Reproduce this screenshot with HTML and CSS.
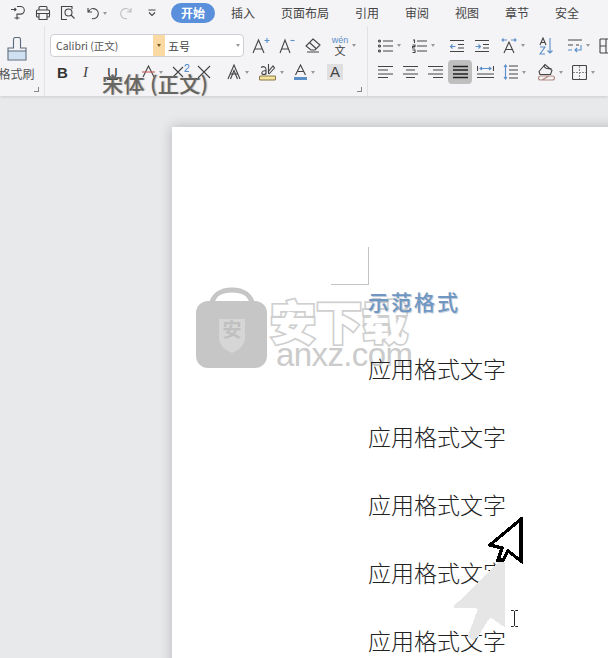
FILE: index.html
```html
<!DOCTYPE html>
<html lang="zh">
<head>
<meta charset="utf-8">
<title>文字</title>
<link rel="stylesheet" href="styles.css">
</head>
<body>
<div class="app">
  <header class="ribbon">
    <div class="tabs">
      <div class="quick">
        <span class="q w25"><svg width="16" height="16" viewBox="0 0 16 16" class="ic"><path d="M7 1.500h3.500a3.800 3.800 0 0 1 0 7.600H7V14.500M1 4.500h5M4.500 3L6 4.500 4.500 6M4.500 13h5"/></svg></span>
        <span class="q w25"><svg width="16" height="16" viewBox="0 0 16 16" class="ic"><path d="M4 5V2.500a1 1 0 0 1 1-1h6a1 1 0 0 1 1 1V5M4 12H2.500a1 1 0 0 1-1-1V6a1 1 0 0 1 1-1h11a1 1 0 0 1 1 1v5a1 1 0 0 1-1 1H12M1.500 8.500h13M4 8.500v6h8v-6"/></svg></span>
        <span class="q w27"><svg width="16" height="16" viewBox="0 0 16 16" class="ic"><path d="M12 4V1.500H1.500v13H7"/><circle cx="8.500" cy="7.500" r="3.500"/><path d="M11 10l3.500 3.500"/></svg></span>
        <span class="q w33"><svg width="12" height="14" viewBox="0 0 12 14" class="ic"><path d="M1 2v4h4M1.500 6A5 5 0 1 1 5 12.500"/></svg><i class="caret"></i></span>
        <span class="q w28"><svg width="12" height="14" viewBox="0 0 12 14" class="ic faint"><path d="M11 2v4H7M10.500 6A5 5 0 1 0 7 12.500"/></svg></span>
        <span class="q w20"><svg width="8" height="9" viewBox="0 0 8 9" class="ic"><path d="M.500 1h7M1 3.500l3 3 3-3"/></svg></span>
      </div>
      <nav class="tablist">
        <span class="tab active">开始</span>
        <span class="tab">插入</span>
        <span class="tab">页面布局</span>
        <span class="tab">引用</span>
        <span class="tab">审阅</span>
        <span class="tab">视图</span>
        <span class="tab">章节</span>
        <span class="tab">安全</span>
      </nav>
    </div>
    <div class="groups">
      <section class="group g-brush">
        <svg width="20" height="24" viewBox="0 0 20 24" class="ic thin"><path class="fillblue" d="M1.500 14h17v8.500h-17z"/><path d="M6.500 11V2.500a2 2 0 0 1 2-2h3a2 2 0 0 1 2 2V11h5.500v12H1V11zM1 14h18"/></svg>
        <span class="brush-label">格式刷</span>
        <i class="launch"></i>
      </section>
      <section class="group g-font">
        <div class="row">
          <div class="fontbox">
            <span class="fontname">Calibri (正文)</span>
            <span class="fontdrop"><i class="caret dark"></i></span>
            <span class="fontsize">五号</span>
            <i class="caret"></i>
          </div>
          <span class="t w27"><svg width="18" height="18" viewBox="0 0 18 18" class="ic"><path d="M1 16L6.500 3 12 16M3 12h7"/><path class="blue" d="M12.500 3.500h5M15 1v5"/></svg></span>
          <span class="t w26"><svg width="16" height="18" viewBox="0 0 16 18" class="ic"><path d="M1 16L6 3l5 13M3 12h6"/><path class="blue" d="M11.500 3.500h4"/></svg></span>
          <span class="t w27"><svg width="16" height="15" viewBox="0 0 16 15" class="ic"><path d="M8 1l7 6-5 5H6L1 8zM4.500 4.500l6.500 6M2 14h12"/></svg></span>
          <span class="t w30 wen"><span class="wentext"><b>wén</b><em>文</em></span><i class="caret"></i></span>
        </div>
        <div class="row second">
          <span class="t w26 bold">B</span>
          <span class="t w25 ital">I</span>
          <span class="t w35 under">U</span>
          <span class="t w30"><svg width="13" height="16" viewBox="0 0 13 16" class="ic"><path d="M1 13L6.500 2 12 13"/><path class="red" d="M0 8h13"/></svg><i class="caret"></i></span>
          <span class="t w25"><svg width="18" height="16" viewBox="0 0 18 16" class="ic"><path d="M1 3l10 10M11 3L1 13"/><path class="blue" d="M13 2.500a2 2 0 0 1 4 0c0 1.500-4 3-4 5h4"/></svg></span>
          <span class="t w30"><svg width="14" height="14" viewBox="0 0 14 14" class="ic"><path d="M1 1l12 12M13 1L1 13"/></svg></span>
          <span class="t w32"><svg width="14" height="16" viewBox="0 0 14 16" class="ic"><path d="M1 15L7 1l6 14M3.500 10h7"/><path d="M3.500 15L7 6.500 10.500 15"/></svg><i class="caret"></i></span>
          <span class="t w35"><svg width="17" height="18" viewBox="0 0 17 18" class="ic"><path d="M2 4.500c3-2 5 0 5 2v5M7 8c-4-1-6 3.500-2 3.500 1 0 2-1 2-2M9.500 1v10M10 11l5.500-6-1.500-2-5 6"/><path class="yellow" d="M1.500 13h14a1 1 0 0 1 1 1v2a1 1 0 0 1-1 1h-14a1 1 0 0 1-1-1v-2a1 1 0 0 1 1-1z"/></svg><i class="caret"></i></span>
          <span class="t w33"><svg width="13" height="16" viewBox="0 0 13 16" class="ic"><path d="M1.500 11L6.500 1l5 10M3 7.500h7"/><path class="bluefill" d="M0 13h13v3H0z"/></svg><i class="caret"></i></span>
          <span class="t charbox">A</span>
        </div>
        <i class="launch"></i>
      </section>
      <section class="group g-para">
        <div class="row">
          <span class="t w34"><svg width="15" height="14" viewBox="0 0 15 14" class="ic"><path d="M5 2h10M5 7h10M5 12h10"/><circle cx="1.500" cy="2" r="1"/><circle cx="1.500" cy="7" r="1"/><circle cx="1.500" cy="12" r="1"/></svg><i class="caret"></i></span>
          <span class="t w37"><svg width="15" height="14" viewBox="0 0 15 14" class="ic"><path d="M5 2h10M5 7h10M5 12h10M1 1h1.500v3M.500 6h2.500v1.500H.500V9h2.500M.500 11h2.500v2.500H.500"/></svg><i class="caret"></i></span>
          <span class="t w25"><svg width="15" height="14" viewBox="0 0 15 14" class="ic"><path d="M1 1.500h14M9 5.500h6M9 9h6M1 12.500h14"/><path class="blue" d="M6.500 7.500H1.500M3.500 5.500l-2 2 2 2"/></svg></span>
          <span class="t w27"><svg width="15" height="14" viewBox="0 0 15 14" class="ic"><path d="M1 1.500h14M9 5.500h6M9 9h6M1 12.500h14"/><path class="blue" d="M1.500 7.500h5M4.500 5.500l2 2-2 2"/></svg></span>
          <span class="t w38"><svg width="16" height="17" viewBox="0 0 16 17" class="ic"><path d="M3 16L8 5l5 11M4.500 12.500h7"/><path class="blue" d="M1 3h5M2.500 1.500L1 3l1.500 1.500M10 3h5M13.500 1.500L15 3l-1.500 1.500"/></svg><i class="caret"></i></span>
          <span class="t w28"><svg width="14" height="18" viewBox="0 0 14 18" class="ic"><path d="M1 8l3-7 3 7M2 5.500h4"/><path class="blue" d="M1 10h5l-5 7h5M11 1v15M8.500 13.500L11 16l2.500-2.500"/></svg></span>
          <span class="t w32"><svg width="15" height="15" viewBox="0 0 15 15" class="ic"><path d="M1 2h14M1 7h5M9 7h3"/><path class="blue" d="M14 7v5H8M10 10l-2 2 2 2M1 12h4"/></svg><i class="caret"></i></span>
          <span class="t w25"><svg width="15" height="16" viewBox="0 0 15 16" class="ic"><path d="M1 1h13M1 15h13M7 1v14M1 1v14M1 8h6"/></svg></span>
        </div>
        <div class="row second">
          <span class="t w25"><svg width="15" height="14" viewBox="0 0 15 14" class="ic"><path d="M0 1.500h15M0 5h10M0 9h15M0 12.500h10"/></svg></span>
          <span class="t w25"><svg width="15" height="14" viewBox="0 0 15 14" class="ic"><path d="M0 1.500h15M3 5h9M0 9h15M3 12.500h9"/></svg></span>
          <span class="t w20"><svg width="15" height="14" viewBox="0 0 15 14" class="ic"><path d="M0 1.500h15M5 5h10M0 9h15M5 12.500h10"/></svg></span>
          <span class="t selected"><svg width="15" height="14" viewBox="0 0 15 14" class="ic dark"><path d="M0 1.500h15M0 5h15M0 9h15M0 12.500h15"/></svg></span>
          <span class="t w30 pad"><svg width="17" height="14" viewBox="0 0 17 14" class="ic"><path d="M0 9h17M0 12.500h17M.500 1v5M16.500 1v5"/><path class="blue" d="M3 3.500h11M5 2L3 3.500 5 5M12 2l2 1.500L12 5"/></svg></span>
          <span class="t w35"><svg width="15" height="16" viewBox="0 0 15 16" class="ic"><path d="M6 2h9M6 6h9M6 10h9M6 14h9"/><path class="blue" d="M2.500 1v14M1 3l1.500-2L4 3M1 13l1.500 2L4 13"/></svg><i class="caret"></i></span>
          <span class="t w34"><svg width="17" height="18" viewBox="0 0 17 18" class="ic"><path d="M1 8.500l6-7 7 6-1.500 4H2zM7 1.500c-2 2 0 5 6.500 4"/><path class="hatch" d="M2.500 13h12a1.500 1.500 0 0 1 0 4h-12a1.500 1.500 0 0 1 0-4zM4 17l7-4"/></svg><i class="caret"></i></span>
          <span class="t w25"><svg width="15" height="15" viewBox="0 0 15 15" class="ic"><path d="M1.500.500h12a1 1 0 0 1 1 1v12a1 1 0 0 1-1 1h-12a1 1 0 0 1-1-1v-12a1 1 0 0 1 1-1z"/><path class="dash" d="M7.500 1v13M1 7.500h13"/></svg><i class="caret"></i></span>
        </div>
        <i class="launch"></i>
      </section>
    </div>
  </header>
  <main class="canvas">
    <article class="page">
      <div class="crop"></div>
      <div class="doc">
        <h1 class="doc-title">示范格式</h1>
        <p class="doc-line">应用格式文字</p>
        <p class="doc-line">应用格式文字</p>
        <p class="doc-line">应用格式文字</p>
        <p class="doc-line">应用格式文字</p>
        <p class="doc-line">应用格式文字</p>
      </div>
    </article>
  </main>

  <div class="ghost">宋体 (正文)</div>

  <div class="mark">
    <svg width="72" height="81" viewBox="0 0 72 81" class="bag">
      <path d="M15 18C18 6 26 3 36 3s18 3 21 15" fill="none" stroke="#c6c6c6" stroke-width="5"/>
      <rect x="0" y="14" width="71" height="67" rx="12" fill="#c6c6c6"/>
      <path d="M23 32h26v19c0 8-8 13-13 15-5-2-13-7-13-15z" fill="#d6d6d6"/>
    </svg>
    <span class="bag-text">安</span>
    <span class="mark-cn">安下载</span>
    <span class="mark-en">anxz.com</span>
  </div>

  <svg class="cursor-black" width="36" height="48" viewBox="0 0 36 48" shape-rendering="crispEdges">
    <path d="M33 2V44L20 34 15 43H10L14 31 2 28Z" fill="#fff" stroke="#000" stroke-width="3.200" stroke-linejoin="miter"/>
  </svg>
  <svg class="cursor-gray" width="52" height="80" viewBox="0 0 52 80" shape-rendering="crispEdges">
    <path d="M51 0v65l-4-2-4-3-4-3-3-1-3 4-3 5-3 5-3 5-5 3-5-3 2-6 2-6 2-5 2-6 2-5-4-1H0v-3l5-4 5-5 5-5 5-5 5-5 5-5 5-5 5-5 5-5z" fill="#e6e6e6"/>
  </svg>
  <svg class="ibeam" width="7" height="17" viewBox="0 0 7 17"><path d="M0 .500h2.500l1 1 1-1H7M3.500 1.500v14M0 16.500h2.500l1-1 1 1H7" fill="none" stroke="#222"/></svg>
</div>
</body>
</html>
```

FILE: styles.css
```css
* { box-sizing: border-box; }
html, body { margin: 0; height: 100%; overflow: hidden; }
body { font-family: "Noto Sans CJK SC", "Liberation Sans", sans-serif; color: #3c3c3c; }
.app { position: relative; width: 608px; height: 658px; overflow: hidden; background: #e8e9eb; display: flex; flex-direction: column; }

.ribbon { height: 96px; background: #f4f3f6; box-shadow: 0 1px 3px rgba(0,0,0,.12); position: relative; z-index: 2; overflow: hidden; flex: none; }
.tabs { height: 26px; display: flex; align-items: center; padding-left: 10px; white-space: nowrap; }
.quick { display: flex; align-items: center; width: 161px; flex: none; }
.q { display: flex; align-items: center; flex: none; }
.w20 { width: 20px; } .w24 { width: 24px; } .w25 { width: 25px; } .w26 { width: 26px; } .w27 { width: 27px; } .w28 { width: 28px; }
.w30 { width: 30px; } .w32 { width: 32px; } .w33 { width: 33px; } .w34 { width: 34px; } .w35 { width: 35px; } .w37 { width: 37px; } .w38 { width: 38px; }
.tablist { display: flex; align-items: center; gap: 26px; font-size: 12px; line-height: 20px; }
.tab { flex: none; color: #444; }
.tab.active { background: #5a8fdc; color: #fff; font-weight: 700; width: 44px; height: 20px; border-radius: 10px; text-align: center; margin-right: -10px; }

.ic { fill: none; stroke: #444; stroke-width: 1.100; flex: none; display: block; }
.ic.faint { stroke: #bdbdbd; }
.ic.dark { stroke: #222; stroke-width: 1.300; }
.ic.thin { stroke: #5a6a7c; }
.ic .blue { stroke: #5a8fc8; }
.ic .red { stroke: #c4605a; }
.ic .fillblue { fill: #cfe0f2; stroke: none; }
.ic .bluefill { fill: #5a8fc8; stroke: none; }
.ic .yellow { fill: #f6e39c; stroke: #8c7a4a; }
.ic .hatch { stroke: #b08a80; }
.ic .dash { stroke: #888; stroke-dasharray: 2 1; }

.caret { width: 0; height: 0; border: 2.500px solid transparent; border-top: 3px solid #999; border-bottom: 0; margin-left: 4px; flex: none; display: block; }
.caret.dark { border-top-color: #7a5a20; margin: 0; }

.groups { display: flex; height: 70px; }
.group { position: relative; border-right: 1px solid #e2e1e5; flex: none; }
.g-brush { width: 46px; display: flex; flex-direction: column; align-items: center; padding: 11px 10px 0 0; margin-left: -1px; }
.brush-label { font-size: 12px; line-height: 18px; margin-top: 4px; white-space: nowrap; color: #555; }
.g-font { width: 323px; padding: 8px 0 0 5px; }
.g-para { flex: 1; padding: 8px 0 0 10px; border-right: 0; }
.launch { position: absolute; right: 5px; bottom: 4px; width: 5px; height: 5px; border-right: 1px solid #888; border-bottom: 1px solid #888; }
.g-para .launch { display: none; }

.row { display: flex; align-items: center; height: 23px; white-space: nowrap; }
.row.second { height: 24px; margin-top: 3px; }
.g-font .second { padding-left: 6px; }
.t { display: flex; align-items: center; flex: none; }

.fontbox { width: 194px; height: 23px; border: 1px solid #d0d0d4; border-radius: 4px; background: #fff; display: flex; align-items: center; overflow: hidden; flex: none; font-size: 11px; margin-right: 8px; }
.fontname { width: 102px; padding-left: 5px; font-size: 10.500px; flex: none; color: #555; }
.fontdrop { width: 12px; height: 21px; background: #fbd9a3; display: flex; align-items: center; justify-content: center; flex: none; }
.fontsize { width: 67px; padding-left: 3px; flex: none; font-size: 11px; color: #444; }
.wentext { display: flex; flex-direction: column; align-items: center; line-height: 9px; width: 16px; }
.wentext b { font: 9px/9px "Liberation Sans", sans-serif; color: #5a8fc8; }
.wentext em { font-style: normal; font-size: 11px; line-height: 10px; }

.bold { font: 700 15px "Liberation Sans", sans-serif; padding-left: 1px; color: #333; }
.ital { font: italic 15px "Liberation Serif", serif; color: #444; padding-left: 1px; }
.under { font: 15px "Liberation Sans", sans-serif; text-decoration: underline; color: #444; }
.charbox { width: 16px; height: 16px; background: #dfdfe2; font: 15px/16px "Liberation Sans", sans-serif; justify-content: center; color: #444; }
.selected { width: 24px; height: 24px; background: #bfbfbf; border-radius: 4px; justify-content: center; margin-right: 5px; }
.pad { width: 26px; }

.canvas { flex: 1; padding: 31px 0 0 172px; position: relative; }
.page { position: relative; width: 470px; height: 600px; background: #fff; box-shadow: 0 0 12px rgba(0,0,0,.22); padding: 156px 0 0 196px; }
.crop { position: absolute; left: 159px; top: 120px; width: 38px; height: 38px; border-right: 1px solid #c4c4c4; border-bottom: 1px solid #c4c4c4; }
.doc { position: relative; z-index: 5; }
.doc-title { margin: 0; font-size: 21px; line-height: 36px; letter-spacing: 2px; font-weight: 500; color: #7097c2; text-shadow: 1px 1px 1px rgba(90,120,160,.4); }
.doc-line { margin: 0; font-size: 23px; line-height: 68px; color: #222; font-weight: 300; white-space: nowrap; }
.doc-title + .doc-line { margin-top: 15px; }

.ghost { position: absolute; left: 102px; top: 68px; height: 28px; overflow: hidden; font-size: 21px; line-height: 30px; font-weight: 500; letter-spacing: .4px; color: #666662; z-index: 3; white-space: nowrap; text-shadow: 1px 0 1px rgba(150,150,150,.7); }

.mark { position: absolute; left: 196px; top: 287px; width: 215px; height: 82px; z-index: 4; }
.bag { position: absolute; left: 0; top: 0; }
.bag-text { position: absolute; left: 25px; top: 30px; width: 22px; text-align: center; font-size: 19px; line-height: 24px; font-weight: 700; color: #c0c0c0; }
.mark-cn { position: absolute; left: 74px; top: 2px; font-size: 46px; line-height: 60px; font-weight: 900; color: #fff; -webkit-text-stroke: 3.500px #cfcfcf; paint-order: stroke fill; white-space: nowrap; }
.mark-en { position: absolute; left: 80px; top: 52px; font: 33px/32px "Liberation Sans", sans-serif; color: #cbcbcb; white-space: nowrap; letter-spacing: -.6px; }

.cursor-black { position: absolute; left: 488px; top: 517px; z-index: 6; }
.cursor-gray { position: absolute; left: 454px; top: 562px; z-index: 7; }
.ibeam { position: absolute; left: 511px; top: 610px; z-index: 8; }
```
